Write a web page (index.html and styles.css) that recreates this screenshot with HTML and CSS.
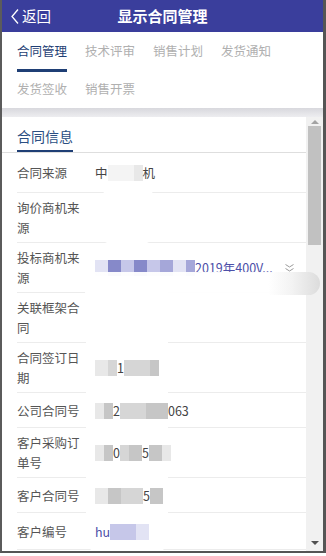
FILE: index.html
```html
<!DOCTYPE html>
<html lang="zh-CN">
<head>
    <meta charset="UTF-8">
    <meta name="viewport" content="width=device-width, initial-scale=1.0">
    <title>显示合同管理</title>
    <link rel="stylesheet" href="styles.css">
</head>
<body>
    <div class="app">
        <div class="topbar">
            <div class="back">
                <svg width="8" height="15" viewBox="0 0 8 15"><path d="M7 0.5 L1 7.5 L7 14.5" fill="none" stroke="#fff" stroke-width="1.3"/></svg>
                <span>返回</span>
            </div>
            <div class="title">显示合同管理</div>
            <div></div>
        </div>

        <div class="tabs">
            <div class="tab on">合同管理</div>
            <div class="tab">技术评审</div>
            <div class="tab">销售计划</div>
            <div class="tab">发货通知</div>
            <div class="tab">发货签收</div>
            <div class="tab">销售开票</div>
        </div>
        <div class="shade"></div>

        <div class="main">
            <div class="list">
                <div class="smudge"></div>
                <div class="smudge small"></div>

                <div class="sec"><span>合同信息</span></div>

                <div class="row first">
                    <div class="label">合同来源</div>
                    <div class="val">中<i class="px g4"></i><i class="px g4"></i><i class="px g3 n"></i>机</div>
                </div>
                <div class="row">
                    <div class="label">询价商机来源</div>
                    <div class="val"></div>
                </div>
                <div class="row">
                    <div class="label">投标商机来源</div>
                    <div class="val link">
                        <i class="px b4"></i><i class="px b1"></i><i class="px b3"></i><i class="px b1"></i><i class="px b3"></i><i class="px b2"></i><i class="px b4"></i><i class="px b2 n"></i>2019年400V...
                        <svg class="more" width="9" height="8" viewBox="0 0 9 8"><path d="M0.5 0.5 L4.5 3 L8.5 0.5 M0.5 4.5 L4.5 7 L8.5 4.5" fill="none" stroke="#9a9a9a" stroke-width="1"/></svg>
                    </div>
                </div>
                <div class="row">
                    <div class="label">关联框架合同</div>
                    <div class="val"></div>
                </div>
                <div class="row">
                    <div class="label">合同签订日期</div>
                    <div class="val"><i class="px g3"></i><i class="px g2 n"></i>1<i class="px g2"></i><i class="px g2"></i><i class="px g1 n"></i></div>
                </div>
                <div class="row">
                    <div class="label">公司合同号</div>
                    <div class="val"><i class="px g3 n"></i><i class="px g1 n"></i>2<i class="px g2"></i><i class="px g2"></i><i class="px g1"></i><i class="px g1 n"></i>063</div>
                </div>
                <div class="row">
                    <div class="label">客户采购订单号</div>
                    <div class="val"><i class="px g3 n"></i><i class="px g1 n"></i>0<i class="px g2 n"></i><i class="px g1"></i>5<i class="px g1"></i><i class="px g3 n"></i></div>
                </div>
                <div class="row">
                    <div class="label">客户合同号</div>
                    <div class="val"><i class="px g3"></i><i class="px g1"></i><i class="px g2"></i><i class="px g2 n"></i>5<i class="px g1"></i></div>
                </div>
                <div class="row last">
                    <div class="label">客户编号</div>
                    <div class="val link">hu<i class="px b3"></i><i class="px b3"></i><i class="px b4"></i></div>
                </div>
            </div>

            <div class="bar">
                <div class="arrow up"></div>
                <div class="thumb"></div>
                <div class="track"></div>
                <div class="arrow down"></div>
            </div>

            <div class="band"></div>
        </div>
    </div>
</body>
</html>
```

FILE: styles.css
```css
* {
    box-sizing: border-box;
}

body {
    margin: 0;
    font-family: "Noto Sans CJK SC", "Noto Sans", sans-serif;
    background: #fff;
}

.app {
    width: 326px;
    height: 553px;
    border-left: 2px solid #5b5b5b;
    border-right: 3px solid #555;
    border-bottom: 2px solid #555;
    display: flex;
    flex-direction: column;
    overflow: hidden;
}

.topbar {
    height: 32px;
    flex-shrink: 0;
    background: #3a3e9c;
    color: #fff;
    display: grid;
    grid-template-columns: 1fr auto 1fr;
    align-items: center;
}

.back {
    display: flex;
    align-items: center;
    gap: 3px;
    padding-left: 9px;
    font-size: 14.5px;
    line-height: 20px;
}

.title {
    font-size: 15px;
    font-weight: bold;
    line-height: 20px;
}

.tabs {
    display: flex;
    flex-wrap: wrap;
    column-gap: 18px;
    padding: 0 15px;
    flex-shrink: 0;
}

.tab {
    position: relative;
    padding: 9px 0;
    font-size: 12.5px;
    line-height: 20px;
    color: #b0b0b0;
}

.tab.on {
    color: #1f3f75;
}

.tab.on::after {
    content: "";
    position: absolute;
    left: 0;
    right: 0;
    bottom: -2px;
    height: 3px;
    background: #1f3f75;
}

.shade {
    height: 9px;
    flex-shrink: 0;
    background: linear-gradient(#d8d8dd, #ededf0);
}

.main {
    flex: 1;
    min-height: 0;
    display: flex;
    position: relative;
}

.list {
    flex: 1;
    overflow: hidden;
    position: relative;
}

.sec {
    padding: 6px 0 0 15px;
    border-bottom: 1px solid #dedede;
}

.sec span {
    display: inline-block;
    font-size: 14px;
    line-height: 20px;
    color: #2b4f83;
    padding-bottom: 4px;
    border-bottom: 2px solid #1f3f75;
}

.row {
    margin-left: 15px;
    min-height: 35px;
    padding: 5px 0 4px;
    display: flex;
    align-items: center;
    border-bottom: 1px solid #ececec;
    font-size: 12.5px;
    line-height: 20px;
}

.row.first {
    min-height: 40px;
}

.row.last {
    min-height: 37px;
}

.label {
    width: 72px;
    flex-shrink: 0;
    color: #555;
}

.val {
    flex: 1;
    margin-left: 6px;
    display: flex;
    align-items: center;
    color: #444;
    position: relative;
    z-index: 2;
}

.val.link {
    color: #4d50a8;
}

.more {
    margin-left: auto;
    margin-right: 12px;
}

.px {
    display: inline-block;
    width: 13px;
    height: 16px;
}

.px.n {
    width: 9px;
}

.g1 { background: #c6c6c6; }
.g2 { background: #d6d6d6; }
.g3 { background: #e8e8e8; }
.g4 { background: #f4f4f4; }
.b1 { background: #8689c9; }
.b2 { background: #a5a7d9; }
.b3 { background: #c6c7e9; }
.b4 { background: #e2e3f4; }

.smudge {
    position: absolute;
    left: 84px;
    top: 120px;
    width: 82px;
    bottom: -20px;
    background: #fff;
    border-radius: 40px;
    z-index: 1;
}

.smudge.small {
    left: 100px;
    top: 45px;
    bottom: auto;
    width: 52px;
    height: 38px;
    border-radius: 14px;
}

.bar {
    width: 17px;
    flex-shrink: 0;
    background: #f1f1f1;
    display: flex;
    flex-direction: column;
    align-items: center;
}

.arrow {
    height: 9px;
    display: flex;
    align-items: center;
    justify-content: center;
}

.arrow::before {
    content: "";
    border-left: 4px solid transparent;
    border-right: 4px solid transparent;
}

.arrow.up::before {
    border-bottom: 4px solid #a3a3a3;
}

.arrow.down {
    height: 17px;
}

.arrow.down::before {
    border-top: 4px solid #505050;
}

.thumb {
    width: 13px;
    height: 119px;
    background: #c1c1c1;
}

.track {
    flex: 1;
}

.band {
    position: absolute;
    left: 83px;
    right: 3px;
    top: 155px;
    height: 23px;
    border-radius: 0 12px 12px 0;
    background: linear-gradient(90deg, rgba(255, 255, 255, 0.96) 0, rgba(255, 255, 255, 0.96) 78%, #f3f3f3 88%, #dcdcdc 100%);
    z-index: 3;
}
```
